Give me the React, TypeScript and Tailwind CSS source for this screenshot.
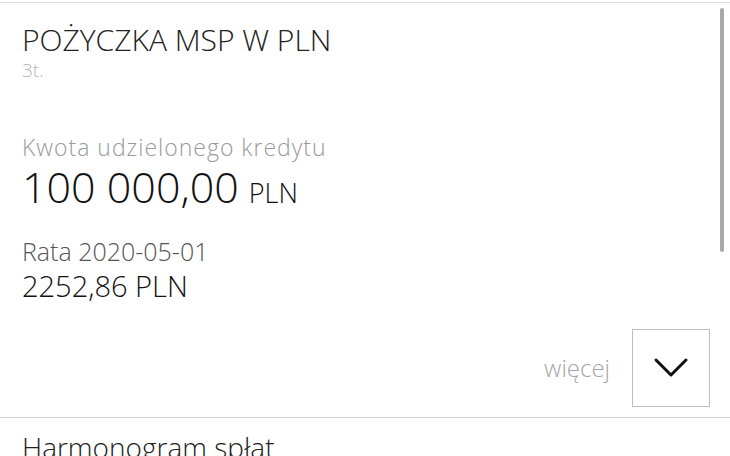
import React from "react";

const font = { fontFamily: "'Open Sans', Lato, sans-serif" };

const LoanCard: React.FC = () => {
  return (
    <div className="relative h-[456px] w-[730px] overflow-hidden bg-white font-light" style={font}>
      <div className="h-[2px]" />
      <div className="border-t border-[#dcdcdc]">
        <div className="px-[22px] pt-[20px]">
          <h1 className="text-[30px] leading-[34px] text-[#222]">POŻYCZKA MSP W PLN</h1>
          <p className="mt-[2px] text-[19px] leading-[22px] text-[#b5b5b5]">3t.</p>

          <p className="mt-[51px] text-[23px] leading-[30px] tracking-[1px] text-[#9a9a9a]">Kwota udzielonego kredytu</p>
          <p className="mt-[2px] leading-[46px] text-[#111]">
            <span className="text-[43px]">100 000,00</span>
            <span className="ml-[10px] text-[27px]">PLN</span>
          </p>

          <p className="mt-[16px] text-[25px] leading-[30px] text-[#555]">Rata 2020-05-01</p>
          <p className="mt-[4px] text-[29px] leading-[32px] text-[#111]">2252,86 PLN</p>
        </div>

        <div className="mt-[27px] flex items-center justify-end pr-[20px]">
          <span className="mr-[22px] text-[24px] text-[#a5a5a5]">więcej</span>
          <button className="flex h-[78px] w-[78px] items-center justify-center border border-[#bdbdbd]">
            <svg width="36" height="22" viewBox="0 0 36 22" fill="none">
              <path d="M3 3 L18 18 L33 3" stroke="#111" strokeWidth="3" strokeLinecap="round" strokeLinejoin="round" />
            </svg>
          </button>
        </div>

        <div className="mt-[10px] border-t border-[#cfcfcf] px-[22px] pt-[12px]">
          <p className="text-[28px] leading-[34px] text-[#222]">Harmonogram spłat</p>
        </div>
      </div>

      <div className="absolute right-[6px] top-[8px] h-[244px] w-[4px] rounded-full bg-[#a8a8a8]" />
    </div>
  );
};

export default function App() {
  return <LoanCard />;
}
